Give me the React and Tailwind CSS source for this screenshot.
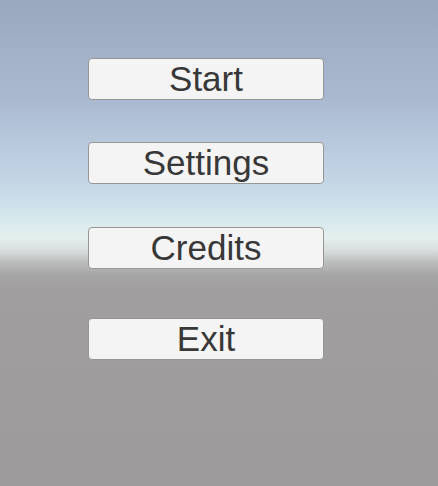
const buttons = [
  { label: "Start", mt: "mt-[58px]" },
  { label: "Settings", mt: "mt-[42px]" },
  { label: "Credits", mt: "mt-[43px]" },
  { label: "Exit", mt: "mt-[49px]" },
];

export default function App() {
  return (
    <div className="h-[486px] w-[438px] overflow-hidden bg-[linear-gradient(to_bottom,#9aa7bf_0px,#aab9d0_100px,#bdcee1_160px,#cadde9_200px,#d8e9ed_220px,#e4efee_238px,#d8dede_250px,#bcbebe_262px,#a6a5a5_275px,#a09e9e_290px,#9c9a9a_486px)]">
      <div className="flex flex-col pl-[88px]">
        {buttons.map(b => (
          <button
            key={b.label}
            className={`${b.mt} flex h-[42px] w-[236px] items-center justify-center rounded-[4px] border border-[#969696] bg-[#f4f4f4] pb-[1px] font-['Liberation_Sans',Arial,sans-serif] text-[35px] leading-none text-[#383838]`}
          >
            {b.label}
          </button>
        ))}
      </div>
    </div>
  );
}
